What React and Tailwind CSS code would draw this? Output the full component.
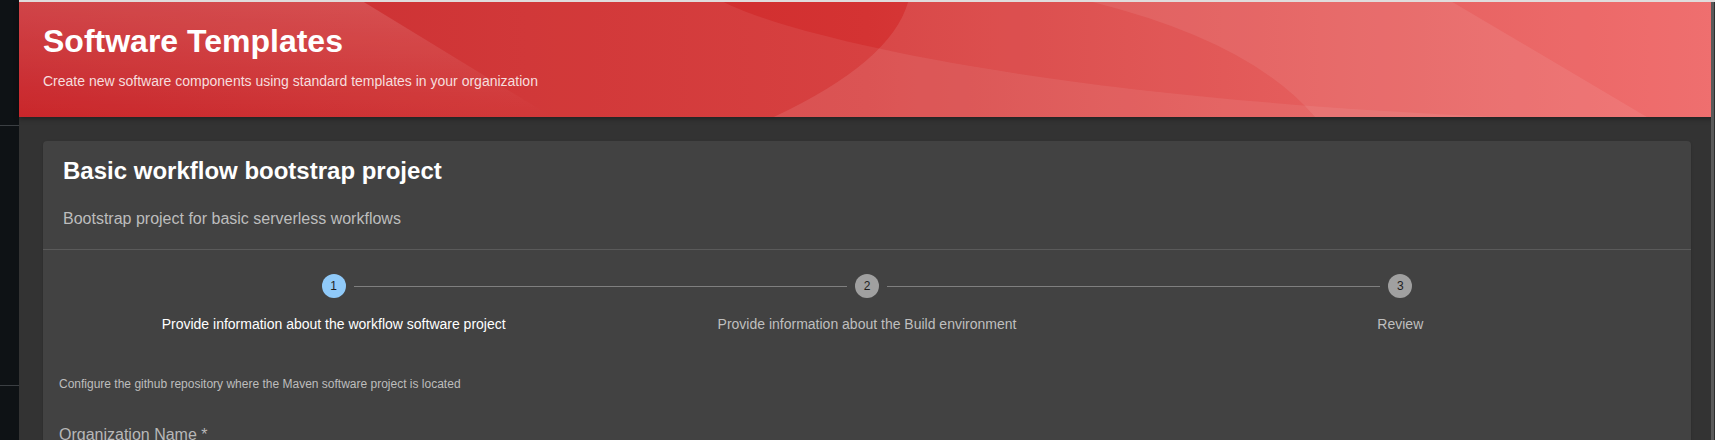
import React from 'react'

const steps = [
  'Provide information about the workflow software project',
  'Provide information about the Build environment',
  'Review',
]

function HeaderWaves() {
  return (
    <svg className="absolute inset-0 h-full w-full" viewBox="0 0 1692 115" preserveAspectRatio="none">
      <defs>
        <linearGradient id="topLeftGlow" x1="0" y1="0" x2="0" y2="1">
          <stop offset="0" stopColor="#fff" stopOpacity="0.14" />
          <stop offset="1" stopColor="#fff" stopOpacity="0" />
        </linearGradient>
      </defs>
      <path d="M0 0 L344 0 L532 115 L0 115 Z" fill="url(#topLeftGlow)" />
      <path d="M0 0 L703 0 C760 30 1000 95 1480 115 L0 115 Z" fill="#fff" fillOpacity="0.07" />
      <path d="M887 0 Q870 60 753 115 L1692 115 L1692 0 Z" fill="#fff" fillOpacity="0.1" />
      <path d="M1071 0 Q1230 40 1293 115 L1624 115 L1430 0 Z" fill="#fff" fillOpacity="0.08" />
    </svg>
  )
}

function Step({ index, label, active }) {
  return (
    <div className="relative flex flex-1 flex-col items-center">
      {index > 0 && (
        <div className="absolute top-[12px] left-[calc(-50%+20px)] right-[calc(50%+20px)] h-px bg-[#7f7f7f]" />
      )}
      <div
        className={
          active
            ? 'flex h-6 w-6 items-center justify-center rounded-full bg-[#90caf9] text-[12px] text-[#1f1f1f]'
            : 'flex h-6 w-6 items-center justify-center rounded-full bg-[#a0a0a0] text-[12px] text-[#1f1f1f]'
        }
      >
        {index + 1}
      </div>
      <div className={active ? 'mt-4 text-[14px] leading-5 text-white' : 'mt-4 text-[14px] leading-5 text-[#bfbfbf]'}>
        {label}
      </div>
    </div>
  )
}

export default function App() {
  return (
    <div className="flex h-[440px] w-full overflow-hidden bg-[#333333] font-['Liberation_Sans',Arial,sans-serif]">
      <aside className="flex w-[19px] shrink-0 flex-col bg-[#0e1215]">
        <div className="h-[126px] border-b border-[#3b3f43]" />
        <div className="h-[260px] border-b border-[#3b3f43]" />
      </aside>

      <main className="relative flex min-w-0 flex-1 flex-col">
        <header className="relative z-10 h-[117px] shrink-0 overflow-hidden border-t-2 border-[#e0dcdc] bg-linear-to-r from-[#c5161b] via-[#d43333] to-[#ee5f5f] px-6 pt-5 shadow-[0_2px_5px_rgba(0,0,0,0.35)]">
          <HeaderWaves />
          <div className="relative">
            <h1 className="text-[32px] font-bold leading-[38px] text-white">Software Templates</h1>
            <p className="mt-[11px] text-[14px] leading-5 text-[#f6dede]">
              Create new software components using standard templates in your organization
            </p>
          </div>
        </header>

        <div className="px-6 pt-6">
          <div className="rounded bg-[#424242] shadow-[0_2px_1px_-1px_rgba(0,0,0,0.2),0_1px_1px_0_rgba(0,0,0,0.14),0_1px_3px_0_rgba(0,0,0,0.12)]">
            <div className="px-5 pt-[14px] pb-[18px]">
              <h2 className="text-[24px] font-bold leading-[32px] text-white">Basic workflow bootstrap project</h2>
              <p className="mt-5 text-[16px] leading-6 text-[#bdbdbd]">Bootstrap project for basic serverless workflows</p>
            </div>
            <div className="border-t border-[#5a5a5a]" />

            <div className="flex p-6">
              {steps.map((label, i) => (
                <Step key={label} index={i} label={label} active={i === 0} />
              ))}
            </div>

            <div className="px-4 pt-4 pb-8">
              <p className="text-[12px] leading-5 text-[#bdbdbd]">
                Configure the github repository where the Maven software project is located
              </p>
              <label className="mt-[29px] block text-[16px] leading-6 text-[#b8b8b8]">Organization Name *</label>
            </div>
          </div>
        </div>

        <div className="absolute top-[2px] right-0 bottom-0 z-20 flex w-[4px] bg-[#2e2e2e]">
          <div className="h-full w-[3px] bg-[#5a5a5a]" />
        </div>
      </main>
    </div>
  )
}
